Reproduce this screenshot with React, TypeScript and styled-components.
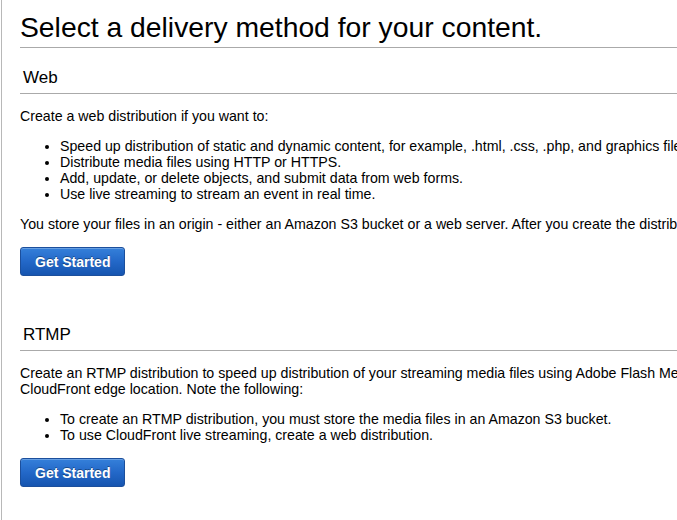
import React from "react";
import styled, { createGlobalStyle } from "styled-components";

const GlobalStyle = createGlobalStyle`
  html, body {
    margin: 0;
    padding: 0;
    overflow: hidden;
    background: #ffffff;
  }
  body {
    font-family: "Liberation Sans", Arial, Helvetica, sans-serif;
    color: #000000;
  }
`;

const Frame = styled.div`
  margin-left: 1px;
  border-left: 1px solid #b8b8b8;
  min-height: 100vh;
  padding-left: 18px;
  box-sizing: border-box;
`;

const Content = styled.div`
  width: 1400px;
`;

const Title = styled.h1`
  margin: 0;
  padding: 11px 0 4px;
  font-size: 28.3px;
  line-height: 32px;
  font-weight: normal;
  border-bottom: 1px solid #aaaaaa;
`;

const Section = styled.section<{ $gap: number }>`
  margin-top: ${(p) => p.$gap}px;
`;

const SectionTitle = styled.h2`
  margin: 0;
  padding: 0 0 5px 3px;
  font-size: 17px;
  line-height: 20px;
  font-weight: normal;
  border-bottom: 1px solid #aaaaaa;
`;

const Text = styled.p`
  margin: 14px 0;
  font-size: 14.2px;
  line-height: 16px;
  white-space: nowrap;
`;

const List = styled.ul`
  margin: 14px 0;
  padding-left: 40px;
  font-size: 14.2px;
  line-height: 16px;
  white-space: nowrap;
`;

const Button = styled.button`
  display: block;
  margin: 15px 0 0;
  height: 29px;
  padding: 0 14px;
  font-family: "Liberation Sans", Arial, Helvetica, sans-serif;
  font-size: 14px;
  font-weight: bold;
  color: #ffffff;
  text-shadow: 0 -1px 0 rgba(0, 0, 0, 0.35);
  background: linear-gradient(to bottom, #3580da 0%, #2368c8 50%, #1655b0 100%);
  border: 1px solid #1c4f9c;
  border-radius: 3px;
  box-shadow: inset 0 1px 0 rgba(255, 255, 255, 0.25);
  cursor: pointer;
`;

export default function App() {
  return (
    <>
      <GlobalStyle />
      <Frame>
        <Content>
          <Title>Select a delivery method for your content.</Title>

          <Section $gap={20}>
            <SectionTitle>Web</SectionTitle>
            <Text>Create a web distribution if you want to:</Text>
            <List>
              <li>
                Speed up distribution of static and dynamic content, for example, .html, .css, .php, and graphics files.
              </li>
              <li>Distribute media files using HTTP or HTTPS.</li>
              <li>Add, update, or delete objects, and submit data from web forms.</li>
              <li>Use live streaming to stream an event in real time.</li>
            </List>
            <Text>
              You store your files in an origin - either an Amazon S3 bucket or a web server. After you create the distribution, you can add more origins to the distribution.
            </Text>
            <Button type="button">Get Started</Button>
          </Section>

          <Section $gap={49}>
            <SectionTitle>RTMP</SectionTitle>
            <Text>
              Create an RTMP distribution to speed up distribution of your streaming media files using Adobe Flash Media Server's RTMP protocol.
              <br />
              CloudFront edge location. Note the following:
            </Text>
            <List>
              <li>To create an RTMP distribution, you must store the media files in an Amazon S3 bucket.</li>
              <li>To use CloudFront live streaming, create a web distribution.</li>
            </List>
            <Button type="button">Get Started</Button>
          </Section>
        </Content>
      </Frame>
    </>
  );
}
